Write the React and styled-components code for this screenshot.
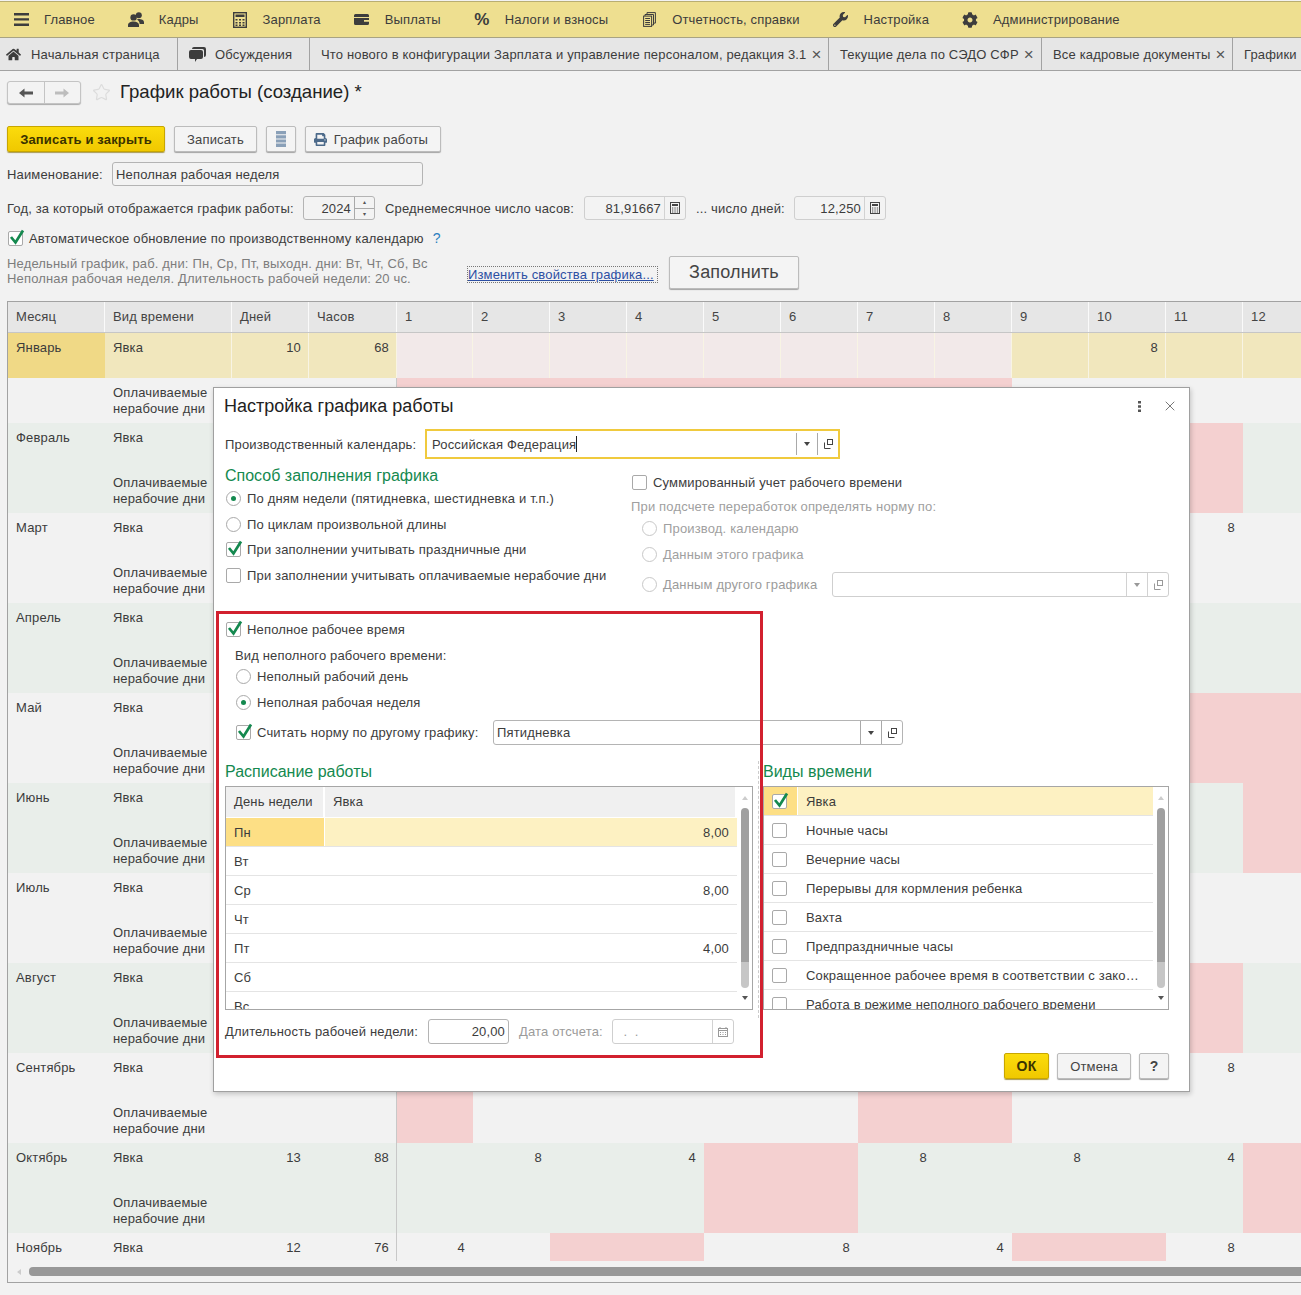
import React from "react";
import styled, { createGlobalStyle } from "styled-components";
import { FaWrench, FaCog, FaHome, FaPrint } from "react-icons/fa";
import { Star, X } from "lucide-react";

const GlobalStyle = createGlobalStyle`
  html, body { margin: 0; padding: 0; background: #f2f2f2; }
  body {
    font-family: "Liberation Sans", Arial, sans-serif;
    font-size: 13px;
    color: #3c3c3c;
    letter-spacing: 0.16px;
  }
  * { box-sizing: border-box; }
`;

const Page = styled.div`
  position: relative;
  width: 1301px;
  height: 1295px;
  overflow: hidden;
  background: #f2f2f2;
`;

/* top menu */
const TopMenu = styled.div`
  display: flex;
  align-items: center;
  gap: 33px;
  height: 37px;
  margin-top: 1px;
  padding: 0 0 0 13px;
  background: #eedf90;
  border-top: 1px solid #b9ae72;
  border-bottom: 1px solid #a8a383;
`;
const MenuItem = styled.div`
  display: flex;
  align-items: center;
  gap: 15px;
  white-space: nowrap;
`;
const MenuIcon = styled.span`
  display: flex;
  align-items: center;
  justify-content: center;
  width: 16px;
  color: #3d3d3d;
  font-size: ${(p) => p.$size || 15}px;
  font-weight: bold;
`;

/* tabs */
const Tabs = styled.div`
  display: flex;
  height: 33px;
  background: #e6e6e6;
  border-bottom: 1px solid #a2a2a2;
`;
const Tab = styled.div`
  display: flex;
  align-items: center;
  flex: none;
  gap: ${(p) => p.$gap || 5}px;
  width: ${(p) => p.$w}px;
  padding-left: ${(p) => p.$pad || 11}px;
  border-right: 1px solid #a2a2a2;
  white-space: nowrap;
`;
const TabClose = styled.span`
  color: #555;
  font-size: 17px;
  line-height: 1;
`;

/* form */
const Form = styled.div`
  padding-left: 7px;
`;
const Row = styled.div`
  display: flex;
  align-items: center;
  gap: ${(p) => p.$gap || 0}px;
  height: ${(p) => p.$h || 24}px;
  margin-top: ${(p) => p.$mt || 0}px;
  padding-left: ${(p) => p.$pl || 0}px;
  white-space: nowrap;
`;
const NavGroup = styled.div`
  display: flex;
  width: 74px;
  height: 23px;
  border: 1px solid #c4c4c4;
  border-radius: 3px;
  background: #f3f3f3;
  box-shadow: 0 1px 1px #aaa;
`;
const NavBtn = styled.div`
  flex: 1;
  display: flex;
  align-items: center;
  justify-content: center;
  border-left: ${(p) => (p.$off ? "1px solid #c4c4c4" : "none")};
`;
const Title = styled.div`
  margin: -2px 0 0 -2px;
  font-size: 18.6px;
  color: #222;
  letter-spacing: 0;
`;
const Button = styled.div`
  display: flex;
  align-items: center;
  justify-content: center;
  gap: 7px;
  flex: none;
  width: ${(p) => p.$w}px;
  height: ${(p) => p.$h || 26}px;
  margin-left: ${(p) => p.$ml || 0}px;
  padding-right: ${(p) => p.$pr || 0}px;
  border: 1px solid ${(p) => (p.$primary ? "#c8a600" : "#bcbcbc")};
  border-radius: 2px;
  background: ${(p) => (p.$primary ? "linear-gradient(#fbdc0c, #f0c800)" : "#f4f4f4")};
  box-shadow: 0 1px 1px ${(p) => (p.$primary ? "#a89a52" : "#a3a3a3")};
  color: ${(p) => (p.$primary ? "#3a3200" : "#444")};
  font-weight: ${(p) => (p.$primary || p.$bold ? "bold" : "normal")};
  font-size: ${(p) => p.$fs || 13}px;
`;
const Label = styled.span`
  flex: none;
  width: ${(p) => (p.$w ? `${p.$w}px` : "auto")};
  margin-left: ${(p) => p.$ml || 0}px;
  color: ${(p) => (p.$muted ? "#9b9b9b" : "#3c3c3c")};
`;
const Field = styled.div`
  display: flex;
  align-items: stretch;
  flex: none;
  width: ${(p) => p.$w}px;
  height: ${(p) => p.$h || 24}px;
  border: ${(p) => (p.$focus ? "2px solid #f0ca3e" : `1px solid ${p.$soft ? "#cfcfcf" : "#b4b4b4"}`)};
  border-radius: ${(p) => (p.$focus ? 0 : 3)}px;
  background: ${(p) => p.$bg || "#fff"};
`;
const FieldText = styled.div`
  flex: 1;
  display: flex;
  align-items: center;
  justify-content: ${(p) => (p.$right ? "flex-end" : "flex-start")};
  padding: ${(p) => (p.$right ? "0 3px 0 0" : `0 3px 0 ${p.$pl || 3}px`)};
  overflow: hidden;
`;
const Caret = styled.span`
  width: 1px;
  height: 16px;
  background: #222;
`;
const FieldBtn = styled.div`
  display: flex;
  align-items: center;
  justify-content: center;
  flex: none;
  width: ${(p) => p.$w || 21}px;
  margin: ${(p) => (p.$inset ? "2px 0" : "0")};
  border-left: 1px solid ${(p) => (p.$soft ? "#d2d2d2" : "#a9a9a9")};
  color: ${(p) => (p.$soft ? "#999" : "#444")};
`;
const DownArrow = styled.span`
  width: 0;
  height: 0;
  border-left: 3px solid transparent;
  border-right: 3px solid transparent;
  border-top: 4px solid currentColor;
`;
const Spin = styled.div`
  display: flex;
  flex-direction: column;
  flex: none;
  width: 20px;
  border-left: 1px solid #a9a9a9;
`;
const SpinPart = styled.div`
  flex: 1;
  display: flex;
  align-items: center;
  justify-content: center;
  font-size: 6px;
  line-height: 1;
  color: #555;
  border-top: ${(p) => (p.$second ? "1px solid #a9a9a9" : "none")};
`;
const Hint = styled.span`
  margin-left: 3px;
  color: #2b7fc0;
  font-size: 14px;
`;
const Info = styled.div`
  flex: none;
  align-self: flex-start;
  width: 461px;
  line-height: 15px;
  color: #7d7d7d;
`;
const EditLink = styled.span`
  flex: none;
  width: 189px;
  margin-top: 3px;
  outline: 1px dotted #777;
  color: #2c4fa3;
  text-decoration: underline;
  line-height: 15px;
`;

/* check and radio */
const Option = styled.div`
  display: flex;
  align-items: center;
  gap: ${(p) => p.$gap || 6}px;
  height: ${(p) => p.$h || 26}px;
  margin-top: ${(p) => p.$mt || 0}px;
  padding-left: ${(p) => p.$pl || 1}px;
  color: ${(p) => (p.$muted ? "#a0a0a0" : "#3c3c3c")};
  white-space: nowrap;
`;
const BoxWrap = styled.span`
  position: relative;
  display: block;
  flex: none;
  width: 15px;
  height: 15px;
  border: 1px solid #a9a9a9;
  border-radius: 2px;
  background: #fff;
`;
const Tick = styled.svg`
  position: absolute;
  left: -1px;
  top: -6px;
`;
const RadioWrap = styled.span`
  display: flex;
  align-items: center;
  justify-content: center;
  flex: none;
  width: 15px;
  height: 15px;
  border: 1px solid ${(p) => (p.$muted ? "#c8c8c8" : "#a9a9a9")};
  border-radius: 50%;
  background: #fff;
`;
const RadioDot = styled.span`
  width: 5px;
  height: 5px;
  border-radius: 50%;
  background: #14894f;
`;

const Check = ({ on }) => (
  <BoxWrap>
    {on && (
      <Tick width="17" height="20" viewBox="0 0 17 20">
        <path d="M3 11 L7.5 16.5 L15 4.5" fill="none" stroke="#14894f" strokeWidth="2.7" />
      </Tick>
    )}
  </BoxWrap>
);
const Radio = ({ on, muted }) => <RadioWrap $muted={muted}>{on && <RadioDot />}</RadioWrap>;

/* little drawn icons */
const CalcIcon = ({ size = 12, color = "#444" }) => (
  <svg width={size} height={size * 1.2} viewBox="0 0 10 12">
    <rect x="0.5" y="0.5" width="9" height="11" fill="none" stroke={color} />
    <rect x="2" y="2" width="6" height="2" fill={color} />
    <path d="M2 6h1.3M4.4 6h1.3M6.8 6h1.3M2 8h1.3M4.4 8h1.3M6.8 8h1.3M2 10h1.3M4.4 10h1.3M6.8 10h1.3" stroke={color} />
  </svg>
);
const BigCalcIcon = () => (
  <svg width="14" height="16" viewBox="0 0 14 16">
    <rect x="0.7" y="0.7" width="12.6" height="14.6" fill="none" stroke="#3d3d3d" strokeWidth="1.4" />
    <rect x="2.5" y="2.5" width="9" height="2.5" fill="#3d3d3d" />
    <path d="M2.5 7h2v1.5h-2zM6 7h2v1.5H6zM9.5 7h2v1.5h-2zM2.5 10h2v1.5h-2zM6 10h2v1.5H6zM9.5 10h2v1.5h-2zM2.5 12.5h2V14h-2zM6 12.5h2V14H6zM9.5 12.5h2V14h-2z" fill="#3d3d3d" />
  </svg>
);
const BurgerIcon = () => (
  <svg width="15" height="15" viewBox="0 0 15 15">
    <path d="M0 1h15v2.4H0zM0 6.2h15v2.4H0zM0 11.5h15v2.4H0z" fill="#3d3d3d" />
  </svg>
);
const PeopleIcon = () => (
  <svg width="16" height="15" viewBox="0 0 16 15">
    <circle cx="10.8" cy="3.2" r="3" fill="#3d3d3d" />
    <path d="M10.5 7c3 0 5.5 1 5.5 3.2V12h-4.3c-.2-2-1.2-3.4-2.9-4.4.5-.4 1-.6 1.7-.6z" fill="#3d3d3d" />
    <circle cx="5.6" cy="5.4" r="3.2" fill="#3d3d3d" />
    <path d="M5.6 9.4c3.1 0 5.4 1.3 5.4 3.4V15H0v-2.2c0-2.1 2.4-3.4 5.6-3.4z" fill="#3d3d3d" />
  </svg>
);
const WalletIcon = () => (
  <svg width="15" height="11" viewBox="0 0 15 11">
    <path d="M1.5 0h12A1.5 1.5 0 0 1 15 1.5V3H0V1.5A1.5 1.5 0 0 1 1.5 0z" fill="#3d3d3d" />
    <path d="M0 4h15v2h-5v1.7h5v1.8A1.5 1.5 0 0 1 13.5 11h-12A1.5 1.5 0 0 1 0 9.5z" fill="#3d3d3d" />
  </svg>
);
const DocsIcon = () => (
  <svg width="13" height="15" viewBox="0 0 13 15">
    <path d="M4 2.5V0.6h8.4v10.5H10.5M2 4V2.5h8.5v10.5H9" fill="none" stroke="#3d3d3d" />
    <rect x="0.6" y="4.1" width="8" height="10.3" fill="#eedf90" stroke="#3d3d3d" />
    <path d="M2.2 6.5h4.8M2.2 8.5h4.8M2.2 10.5h4.8M2.2 12.4h4.8" stroke="#3d3d3d" />
  </svg>
);
const BubblesIcon = () => (
  <svg width="17" height="15" viewBox="0 0 17 15">
    <path d="M5 0h10a2 2 0 0 1 2 2v6a2 2 0 0 1-2 2V3.5A1.5 1.5 0 0 0 13.5 2H3a2 2 0 0 1 2-2z" fill="#3d3d3d" />
    <path d="M2 3h10a2 2 0 0 1 2 2v5a2 2 0 0 1-2 2H8l-2 3v-3H2a2 2 0 0 1-2-2V5a2 2 0 0 1 2-2z" fill="#3d3d3d" />
  </svg>
);
const NavArrow = ({ right, color }) => (
  <svg width="14" height="10" viewBox="0 0 14 10" style={right ? { transform: "scaleX(-1)" } : undefined}>
    <path d="M0 5 L5.5 0.5 V3.4 H14 V6.6 H5.5 V9.5 Z" fill={color} />
  </svg>
);
const ListIcon = () => (
  <svg width="10" height="16" viewBox="0 0 10 16">
    <path d="M0 0h10v3.2H0zM0 4.2h10v3.2H0zM0 8.4h10v3.2H0zM0 12.6h10V16H0z" fill="#8aa0b8" />
  </svg>
);
const OpenIcon = ({ color = "#444" }) => (
  <svg width="9" height="10" viewBox="0 0 9 10">
    <rect x="3.5" y="0.5" width="5" height="5" fill="none" stroke={color} />
    <path d="M0.5 3.5v6h6" fill="none" stroke={color} />
  </svg>
);
const DateIcon = () => (
  <svg width="10" height="10" viewBox="0 0 10 10">
    <rect x="0.5" y="1.5" width="9" height="8" fill="none" stroke="#999" />
    <path d="M2 0v2M8 0v2M0 3.5h10M2 5.5h1M4.5 5.5h1M7 5.5h1M2 7.5h1M4.5 7.5h1M7 7.5h1" stroke="#999" />
  </svg>
);
const KebabIcon = () => (
  <svg width="3" height="11" viewBox="0 0 3 11">
    <path d="M0 0h3v2.4H0zM0 4.3h3v2.4H0zM0 8.6h3V11H0z" fill="#555" />
  </svg>
);

/* big table */
const columns = "97px 127px 77px 88px 76px repeat(11, 77px)";
const GridFrame = styled.div`
  width: 1340px;
  height: 982px;
  margin-top: 12px;
  border: 1px solid #a2a2a2;
`;
const GridHead = styled.div`
  display: grid;
  grid-template-columns: ${columns};
  height: 31px;
  background: #e6e6e6;
  border-bottom: 1px solid #c6c6c6;
`;
const HeadCell = styled.div`
  display: flex;
  align-items: center;
  padding: 0 0 2px 8px;
  border-right: 1px solid #fafafa;
  color: #444;
`;
const GridBody = styled.div`
  height: 928px;
  overflow: hidden;
`;
const MonthRow = styled.div`
  display: grid;
  grid-template-columns: ${columns};
  grid-template-rows: 45px ${(p) => (p.$cut ? "" : "45px")};
`;
const Cell = styled.div`
  padding: 7px ${(p) => (p.$num ? `${p.$pr || 7}px` : "0")} 0 ${(p) => (p.$num ? "0" : "8px")};
  background: ${(p) => p.$bg};
  line-height: 16px;
  text-align: ${(p) => (p.$num ? "right" : "left")};
  border-right: 1px solid ${(p) => p.$line || "transparent"};
`;
const HScroll = styled.div`
  display: flex;
  align-items: center;
  height: 21px;
  padding-left: 9px;
`;
const ScrollArrow = styled.span`
  width: 0;
  height: 0;
  border-top: 3px solid transparent;
  border-bottom: 3px solid transparent;
  border-right: 4px solid #ccc;
`;
const HThumb = styled.div`
  width: 1300px;
  height: 9px;
  margin-left: 8px;
  border-radius: 4px;
  background: #989898;
`;

/* dialog */
const Dialog = styled.div`
  position: absolute;
  left: 213px;
  top: 387px;
  width: 977px;
  height: 705px;
  padding: 0 20px 0 11px;
  background: #fff;
  border: 1px solid #a0a0a0;
  box-shadow: 1px 2px 5px rgba(0, 0, 0, 0.2);
`;
const DialogHead = styled.div`
  display: flex;
  align-items: center;
  justify-content: space-between;
  height: 36px;
  margin-left: -1px;
  margin-right: -9px;
`;
const DialogTitle = styled.div`
  font-size: 18px;
  color: #222;
  letter-spacing: 0;
`;
const HeadTools = styled.div`
  display: flex;
  align-items: center;
  gap: 21px;
  color: #555;
`;
const SettingsGrid = styled.div`
  display: grid;
  grid-template-columns: 406px 1fr;
  height: 157px;
`;
const Section = styled.div`
  padding-top: ${(p) => p.$pt || 0}px;
`;
const Heading = styled.div`
  height: 20px;
  line-height: 22px;
  font-size: 16px;
  color: #14894f;
  letter-spacing: 0;
`;
const MutedLine = styled.div`
  height: 20px;
  line-height: 20px;
  margin-top: 2px;
  color: #a0a0a0;
`;
const SubLabel = styled.div`
  height: 20px;
  line-height: 20px;
  margin-top: 4px;
  padding-left: 10px;
`;
const ListsGrid = styled.div`
  display: grid;
  grid-template-columns: 528px 10px 406px;
  margin-top: 16px;
`;
const Splitter = styled.div`
  justify-self: center;
  width: 1px;
  margin-bottom: -8px;
  border-left: 1px dashed #ccc;
`;
const ListFrame = styled.div`
  display: flex;
  height: 224px;
  margin-top: 5px;
  border: 1px solid #a6a6a6;
  overflow: hidden;
`;
const ListBody = styled.div`
  flex: 1;
  min-width: 0;
`;
const ListHead = styled.div`
  display: grid;
  grid-template-columns: 99px 1fr;
  height: 31px;
  background: #f0f0f0;
  border-bottom: 1px solid #fff;
`;
const ListHeadCell = styled.div`
  display: flex;
  align-items: center;
  padding: 0 0 2px 8px;
  border-right: 2px solid #fff;
`;
const ListRow = styled.div`
  display: grid;
  grid-template-columns: ${(p) => p.$cols};
  height: 29px;
  border-bottom: 1px solid #e4e4e4;
`;
const ListCell = styled.div`
  display: flex;
  align-items: center;
  justify-content: ${(p) => (p.$num ? "flex-end" : "flex-start")};
  padding: 0 ${(p) => (p.$num ? "8px" : "0")} 0 ${(p) => (p.$num ? "0" : "8px")};
  background: ${(p) => (p.$first ? "#fddf85" : p.$active ? "#fdf1c2" : "#fff")};
  border-right: ${(p) => (p.$active && p.$first ? "1px solid #fff" : "none")};
  white-space: nowrap;
`;
const BoxCell = styled(ListCell)`
  padding-left: 8px;
  padding-right: 0;
`;
const VScroll = styled.div`
  display: flex;
  flex-direction: column;
  align-items: center;
  flex: none;
  width: 15px;
`;
const VArrow = styled.span`
  flex: none;
  margin-top: ${(p) => p.$mt}px;
  width: 0;
  height: 0;
  border-left: 3px solid transparent;
  border-right: 3px solid transparent;
  ${(p) => (p.$up ? "border-bottom: 4px solid #ccc;" : "border-top: 4px solid #555;")}
`;
const VThumb = styled.div`
  flex: none;
  width: 8px;
  height: ${(p) => p.$h}px;
  margin-top: ${(p) => p.$mt || 0}px;
  background: ${(p) => (p.$light ? "#c6c6c6" : "#a0a0a0")};
  border-radius: ${(p) => (p.$light ? "0 0 4px 4px" : "4px 4px 0 0")};
`;
const DialogButtons = styled.div`
  display: flex;
  justify-content: flex-end;
  gap: 8px;
  margin-top: 9px;
`;
const RedBox = styled.div`
  position: absolute;
  left: 2px;
  top: 223px;
  width: 547px;
  height: 447px;
  border: 3px solid #d2202f;
  pointer-events: none;
`;

const menu = [
  [<BurgerIcon />, "Главное"],
  [<PeopleIcon />, "Кадры"],
  [<BigCalcIcon />, "Зарплата"],
  [<WalletIcon />, "Выплаты"],
  ["%", "Налоги и взносы"],
  [<DocsIcon />, "Отчетность, справки"],
  [<FaWrench size={15} />, "Настройка"],
  [<FaCog size={16} />, "Администрирование"],
];

const months = [
  { name: "Январь", days: 10, hours: 68, active: true, hol: [1, 2, 3, 4, 5, 6, 7, 8], vals: { 10: 8 } },
  { name: "Февраль", alt: true, hol: [11] },
  { name: "Март", vals: { 11: 8 } },
  { name: "Апрель", alt: true },
  { name: "Май", hol: [11, 12] },
  { name: "Июнь", alt: true, hol: [12] },
  { name: "Июль" },
  { name: "Август", alt: true, hol: [11] },
  { name: "Сентябрь", hol: [1, 7, 8], vals: { 11: 8 } },
  { name: "Октябрь", alt: true, days: 13, hours: 88, hol: [5, 6, 12], vals: { 2: 8, 4: 4, 7: 8, 9: 8, 11: 4 } },
  { name: "Ноябрь", cut: true, days: 12, hours: 76, hol: [3, 4, 9, 10], vals: { 1: 4, 6: 8, 8: 4, 11: 8 } },
];
const dayNums = [1, 2, 3, 4, 5, 6, 7, 8, 9, 10, 11, 12];

function MonthBlock({ m }) {
  const base = m.alt ? "#e9eeea" : "#f2f2f2";
  const hol = m.hol || [];
  const top = m.active ? "#f1e7bd" : base;
  const dayBg = (d, isTop) => {
    if (hol.includes(d)) return m.active && isTop ? "#f2e9e9" : "#f4d0d0";
    return isTop ? top : base;
  };
  const topLine = m.active ? "#f8f4e4" : undefined;
  return (
    <MonthRow $cut={m.cut}>
      <Cell $bg={m.active ? "#f0d986" : base}>{m.name}</Cell>
      <Cell $bg={top} $line={topLine}>Явка</Cell>
      <Cell $bg={top} $num $line={topLine}>{m.days}</Cell>
      <Cell $bg={top} $num $line={m.active ? topLine : "#c8c8c8"}>{m.hours}</Cell>
      {dayNums.map((d) => (
        <Cell key={d} $bg={dayBg(d, true)} $num $line={m.active ? topLine : undefined}>
          {m.vals && m.vals[d]}
        </Cell>
      ))}
      {!m.cut && (
        <>
          <Cell $bg={base} />
          <Cell $bg={base}>
            Оплачиваемые
            <br />
            нерабочие дни
          </Cell>
          <Cell $bg={base} />
          <Cell $bg={base} $line="#c8c8c8" />
          {dayNums.map((d) => (
            <Cell key={d} $bg={dayBg(d, false)} />
          ))}
        </>
      )}
    </MonthRow>
  );
}

const schedule = [
  ["Пн", "8,00"],
  ["Вт", ""],
  ["Ср", "8,00"],
  ["Чт", ""],
  ["Пт", "4,00"],
  ["Сб", ""],
  ["Вс", ""],
];
const timeKinds = [
  "Явка",
  "Ночные часы",
  "Вечерние часы",
  "Перерывы для кормления ребенка",
  "Вахта",
  "Предпраздничные часы",
  "Сокращенное рабочее время в соответствии с зако…",
  "Работа в режиме неполного рабочего времени",
];

function ListScroll() {
  return (
    <VScroll>
      <VArrow $up $mt={9} />
      <VThumb $mt={8} $h={154} />
      <VThumb $light $h={26} />
      <VArrow $mt={8} />
    </VScroll>
  );
}

export default function App() {
  return (
    <Page>
      <GlobalStyle />
      <TopMenu>
        {menu.map(([icon, label]) => (
          <MenuItem key={label}>
            <MenuIcon $size={icon === "%" ? 17 : 15}>{icon}</MenuIcon>
            {label}
          </MenuItem>
        ))}
      </TopMenu>
      <Tabs>
        <Tab $w={178} $pad={6} $gap={10}><FaHome size={15} color="#3d3d3d" />Начальная страница</Tab>
        <Tab $w={132} $gap={9}><BubblesIcon />Обсуждения</Tab>
        <Tab $w={519}>Что нового в конфигурации Зарплата и управление персоналом, редакция 3.1<TabClose>×</TabClose></Tab>
        <Tab $w={213}>Текущие дела по СЭДО СФР<TabClose>×</TabClose></Tab>
        <Tab $w={191}>Все кадровые документы<TabClose>×</TabClose></Tab>
        <Tab $w={100}>Графики</Tab>
      </Tabs>
      <Form>
        <Row $h={23} $mt={10} $gap={11}>
          <NavGroup>
            <NavBtn><NavArrow color="#555" /></NavBtn>
            <NavBtn $off><NavArrow right color="#bdbdbd" /></NavBtn>
          </NavGroup>
          <Star size={19} color="#dcdcdc" strokeWidth={1.5} />
          <Title>График работы (создание) *</Title>
        </Row>
        <Row $h={26} $mt={22}>
          <Button $primary $w={158}>Записать и закрыть</Button>
          <Button $w={83} $ml={9}>Записать</Button>
          <Button $w={30} $ml={9}><ListIcon /></Button>
          <Button $w={136} $ml={9} $pr={4}><FaPrint size={13} color="#4c6a8a" />График работы</Button>
        </Row>
        <Row $mt={10}>
          <Label $w={105}>Наименование:</Label>
          <Field $w={311} $bg="#f3f3f3"><FieldText>Неполная рабочая неделя</FieldText></Field>
        </Row>
        <Row $mt={10}>
          <Label $w={296}>Год, за который отображается график работы:</Label>
          <Field $w={72} $bg="#f3f3f3">
            <FieldText $right>2024</FieldText>
            <Spin>
              <SpinPart>▴</SpinPart>
              <SpinPart $second>▾</SpinPart>
            </Spin>
          </Field>
          <Label $w={199} $ml={10}>Среднемесячное число часов:</Label>
          <Field $w={102} $soft $bg="#f3f3f3">
            <FieldText $right>81,91667</FieldText>
            <FieldBtn $soft><CalcIcon size={10} /></FieldBtn>
          </Field>
          <Label $w={98} $ml={10}>... число дней:</Label>
          <Field $w={92} $soft $bg="#f3f3f3">
            <FieldText $right>12,250</FieldText>
            <FieldBtn $soft><CalcIcon size={10} /></FieldBtn>
          </Field>
        </Row>
        <Option $h={24} $mt={6} $pl={1}>
          <Check on />
          <span>Автоматическое обновление по производственному календарю</span>
          <Hint>?</Hint>
        </Option>
        <Row $h={33} $mt={6}>
          <Info>
            Недельный график, раб. дни: Пн, Ср, Пт, выходн. дни: Вт, Чт, Сб, Вс
            <br />
            Неполная рабочая неделя. Длительность рабочей недели: 20 чс.
          </Info>
          <EditLink>Изменить свойства графика...</EditLink>
          <Button $w={130} $h={33} $ml={12} $fs={18}>Заполнить</Button>
        </Row>
        <GridFrame>
          <GridHead>
            <HeadCell>Месяц</HeadCell>
            <HeadCell>Вид времени</HeadCell>
            <HeadCell>Дней</HeadCell>
            <HeadCell>Часов</HeadCell>
            {dayNums.map((d) => (
              <HeadCell key={d}>{d}</HeadCell>
            ))}
          </GridHead>
          <GridBody>
            {months.map((m) => (
              <MonthBlock key={m.name} m={m} />
            ))}
          </GridBody>
          <HScroll>
            <ScrollArrow />
            <HThumb />
          </HScroll>
        </GridFrame>
      </Form>

      <Dialog>
        <DialogHead>
          <DialogTitle>Настройка графика работы</DialogTitle>
          <HeadTools>
            <KebabIcon />
            <X size={16} strokeWidth={1.2} />
          </HeadTools>
        </DialogHead>
        <Row $h={30} $mt={5}>
          <Label $w={200}>Производственный календарь:</Label>
          <Field $w={415} $h={30} $focus>
            <FieldText $pl={5}>Российская Федерация<Caret /></FieldText>
            <FieldBtn $inset><DownArrow /></FieldBtn>
            <FieldBtn $inset><OpenIcon /></FieldBtn>
          </Field>
        </Row>
        <SettingsGrid>
          <Section $pt={6}>
            <Heading>Способ заполнения графика</Heading>
            <Option><Radio on />По дням недели (пятидневка, шестидневка и т.п.)</Option>
            <Option><Radio />По циклам произвольной длины</Option>
            <Option $mt={-1}><Check on />При заполнении учитывать праздничные дни</Option>
            <Option><Check />При заполнении учитывать оплачиваемые нерабочие дни</Option>
          </Section>
          <Section $pt={10}>
            <Option><Check />Суммированный учет рабочего времени</Option>
            <MutedLine>При подсчете переработок определять норму по:</MutedLine>
            <Option $mt={-2} $pl={11} $muted><Radio muted />Производ. календарю</Option>
            <Option $pl={11} $muted><Radio muted />Данным этого графика</Option>
            <Option $h={25} $mt={5} $pl={11} $muted>
              <Radio muted />
              <Label $w={163} $muted>Данным другого графика</Label>
              <Field $w={337} $h={25} $soft>
                <FieldText />
                <FieldBtn $soft><DownArrow /></FieldBtn>
                <FieldBtn $soft><OpenIcon color="#999" /></FieldBtn>
              </Field>
            </Option>
          </Section>
        </SettingsGrid>
        <Option><Check on />Неполное рабочее время</Option>
        <SubLabel>Вид неполного рабочего времени:</SubLabel>
        <Option $mt={-3} $pl={11}><Radio />Неполный рабочий день</Option>
        <Option $pl={11}><Radio on />Неполная рабочая неделя</Option>
        <Option $h={25} $mt={5} $pl={11}>
          <Check on />
          <Label $w={230}>Считать норму по другому графику:</Label>
          <Field $w={410} $h={25}>
            <FieldText>Пятидневка</FieldText>
            <FieldBtn><DownArrow /></FieldBtn>
            <FieldBtn><OpenIcon /></FieldBtn>
          </Field>
        </Option>
        <ListsGrid>
          <div>
            <Heading>Расписание работы</Heading>
            <ListFrame>
              <ListBody>
                <ListHead>
                  <ListHeadCell>День недели</ListHeadCell>
                  <ListHeadCell>Явка</ListHeadCell>
                </ListHead>
                {schedule.map(([day, val], i) => (
                  <ListRow key={day} $cols="99px 1fr">
                    <ListCell $first={i === 0} $active={i === 0}>{day}</ListCell>
                    <ListCell $num $active={i === 0}>{val}</ListCell>
                  </ListRow>
                ))}
              </ListBody>
              <ListScroll />
            </ListFrame>
          </div>
          <Splitter />
          <div>
            <Heading>Виды времени</Heading>
            <ListFrame>
              <ListBody>
                {timeKinds.map((kind, i) => (
                  <ListRow key={kind} $cols="34px 1fr">
                    <BoxCell $first={i === 0} $active={i === 0}><Check on={i === 0} /></BoxCell>
                    <ListCell $active={i === 0}>{kind}</ListCell>
                  </ListRow>
                ))}
              </ListBody>
              <ListScroll />
            </ListFrame>
          </div>
        </ListsGrid>
        <Row $h={25} $mt={9}>
          <Label $w={203}>Длительность рабочей недели:</Label>
          <Field $w={81} $h={25}><FieldText $right>20,00</FieldText></Field>
          <Label $w={93} $ml={10} $muted>Дата отсчета:</Label>
          <Field $w={122} $h={25} $soft>
            <FieldText><Label $muted>&nbsp;&nbsp;.&nbsp;&nbsp;.</Label></FieldText>
            <FieldBtn $soft><DateIcon /></FieldBtn>
          </Field>
        </Row>
        <DialogButtons>
          <Button $primary $w={45} $fs={14}>ОК</Button>
          <Button $w={74}>Отмена</Button>
          <Button $w={30} $fs={14} $bold>?</Button>
        </DialogButtons>
        <RedBox />
      </Dialog>
    </Page>
  );
}
